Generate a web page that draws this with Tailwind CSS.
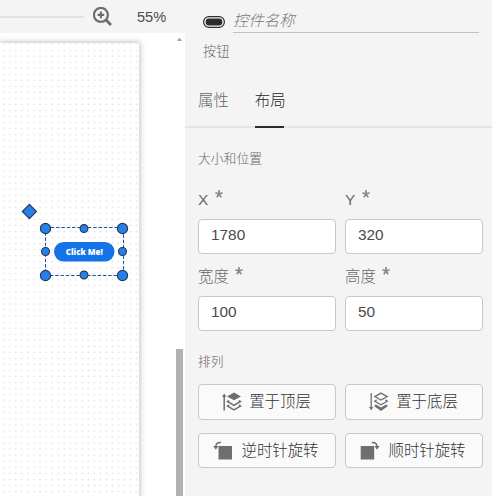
<!DOCTYPE html>
<html lang="zh-CN">
<head>
<meta charset="utf-8">
<title>布局</title>
<script src="https://cdn.jsdelivr.net/npm/@tailwindcss/browser@4"></script>
</head>
<body class="m-0 flex h-[496px] w-[492px] overflow-hidden bg-[#f4f4f4] font-['Liberation_Sans','Noto_Sans_CJK_SC',sans-serif] text-[15.4px] text-[#666]">
<main class="flex w-[185px] shrink-0 flex-col">
  <header class="flex h-[33px] items-center">
    <div class="h-0.5 w-[84px] bg-[#e1e1e1]"></div>
    <svg class="ml-[9px] h-5 w-5" viewBox="0 0 20 20" fill="none" stroke="#6e6e6e"><circle cx="7.9" cy="7.9" r="7" stroke-width="2.2"/><path d="M4.6 7.9h6.6M7.9 4.6v6.6" stroke-width="2.1"/><path d="M12.8 12.8l5.2 5.2" stroke-width="2.8"/></svg>
    <span class="ml-6 text-[14.6px] leading-4 text-[#4b4b4b]">55%</span>
  </header>
  <div class="flex h-[463px] overflow-hidden bg-white">
    <section class="relative mt-[10px] h-[470px] w-[139px] shrink-0 bg-white bg-[radial-gradient(circle_at_3px_3px,#e2e2e2_0.6px,transparent_1.1px)] bg-[length:6.05px_6.05px] bg-[position:-5.3px_-2px] shadow-[0_0_6px_1px_rgba(0,0,0,0.25)]">
      <svg class="absolute left-0 top-0" width="139" height="260" viewBox="0 43 139 260">
        <rect x="45.5" y="227.5" width="78" height="48" fill="none" stroke="#1556ad" stroke-dasharray="3.5 1.8"/>
        <rect x="54" y="242" width="60.5" height="19.5" rx="9.7" fill="#1473e6"/>
        <text x="84.3" y="255.3" text-anchor="middle" fill="white" font-family="Open Sans" font-size="8" font-weight="800">Click Me!</text>
        <g fill="#2680eb" stroke="#26384c" stroke-width="1.1">
          <path d="M29.4 204.4l7.1 7.1-7.1 7.1-7.1-7.1z"/>
          <circle cx="45.5" cy="228.5" r="5.1"/><circle cx="122.5" cy="228.5" r="5.1"/><circle cx="45.5" cy="275.5" r="5.1"/><circle cx="122.5" cy="275.5" r="5.1"/>
          <circle cx="84" cy="228.5" r="3.9"/><circle cx="84" cy="275" r="3.9"/><circle cx="45.5" cy="251.5" r="4"/><circle cx="122.5" cy="251.5" r="4"/>
        </g>
      </svg>
    </section>
    <div class="ml-[37px] flex w-[7px] shrink-0 flex-col items-center">
      <svg class="mt-[5px] h-[3px] w-[5px] shrink-0" viewBox="0 0 5 3"><path d="M0 3L2 0h1l2 3z" fill="#aaa"/></svg>
      <div class="mt-[308px] h-[147px] w-full shrink-0 bg-[#b2b2b2]"></div>
    </div>
  </div>
</main>
<aside class="w-[307px] shrink-0">
  <div class="flex h-[33px] pl-[18px]">
    <svg class="mt-4 h-3 w-[22px]" viewBox="0 0 22 12"><rect x=".6" y=".6" width="20.8" height="10.8" rx="5.4" fill="none" stroke="#2c2c2c" stroke-width="1.2"/><rect x="2.7" y="2.5" width="16.6" height="7" rx="3.2" fill="#2c2c2c"/></svg>
    <div class="ml-2 w-[246px] border-b border-[#c2c2c2] pt-[9px] font-light italic leading-6 text-[#777]">控件名称</div>
  </div>
  <div class="h-[47px] pl-[18px] pt-[9px] text-[13.2px] font-light leading-5">按钮</div>
  <nav class="flex h-12 gap-[26px] border-b-2 border-[#e5e5e5] pl-[13px] leading-[41px] font-light">
    <span class="h-12">属性</span><span class="flex h-12 flex-col text-[#1c1c1c]"><span class="h-[46px]">布局</span><span class="h-0.5 w-[29px] shrink-0 bg-[#2c2c2c]"></span></span>
  </nav>
  <div class="pl-[13px] pr-[9px]">
    <h2 class="h-[58px] pt-[21px] text-[12.8px] font-light leading-5">大小和位置</h2>
    <div class="grid grid-cols-2 gap-x-[9px]">
      <label class="h-[77px]"><span class="flex h-[33px] gap-[7px] leading-7">X<svg class="mt-[4px] h-2 w-2" viewBox="0 0 8 8" fill="none" stroke="#8a8a8a" stroke-width="1.7"><path d="M4 4V0M4 4L.4 2.8M4 4L1.8 7.2M4 4l2.2 3.2M4 4l3.6-1.2"/></svg></span><span class="flex h-[35px] rounded border border-[#c8c8c8] bg-white pl-3 leading-[30px] text-[#4b4b4b]">1780</span></label>
      <label class="h-[77px]"><span class="flex h-[33px] gap-[7px] leading-7">Y<svg class="mt-[4px] h-2 w-2" viewBox="0 0 8 8" fill="none" stroke="#8a8a8a" stroke-width="1.7"><path d="M4 4V0M4 4L.4 2.8M4 4L1.8 7.2M4 4l2.2 3.2M4 4l3.6-1.2"/></svg></span><span class="flex h-[35px] rounded border border-[#c8c8c8] bg-white pl-3 leading-[30px] text-[#4b4b4b]">320</span></label>
      <label class="h-[77px]"><span class="flex h-[33px] gap-[6px] font-light leading-7">宽度<svg class="mt-[4px] h-2 w-2" viewBox="0 0 8 8" fill="none" stroke="#8a8a8a" stroke-width="1.7"><path d="M4 4V0M4 4L.4 2.8M4 4L1.8 7.2M4 4l2.2 3.2M4 4l3.6-1.2"/></svg></span><span class="flex h-[35px] rounded border border-[#c8c8c8] bg-white pl-3 leading-[30px] text-[#4b4b4b]">100</span></label>
      <label class="h-[77px]"><span class="flex h-[33px] gap-[6px] font-light leading-7">高度<svg class="mt-[4px] h-2 w-2" viewBox="0 0 8 8" fill="none" stroke="#8a8a8a" stroke-width="1.7"><path d="M4 4V0M4 4L.4 2.8M4 4L1.8 7.2M4 4l2.2 3.2M4 4l3.6-1.2"/></svg></span><span class="flex h-[35px] rounded border border-[#c8c8c8] bg-white pl-3 leading-[30px] text-[#4b4b4b]">50</span></label>
    </div>
    <h2 class="h-[44px] pt-[12px] text-[12.8px] font-light leading-5">排列</h2>
    <div class="grid grid-cols-2 gap-x-[9px] gap-y-[13px] font-light text-[#333]">
      <button class="flex h-9 items-center justify-center gap-[7px] rounded border border-[#c8c8c8] bg-[#fafafa] pr-px"><svg class="h-5 w-5" viewBox="0 0 20 20" fill="none" stroke="#6e6e6e" stroke-width="1.5"><path d="M2.2 18.5V3"/><path d="M0 4.7L2.2 1.5l2.2 3.2z" fill="#6e6e6e" stroke="none"/><path d="M12 .5l7 3.9-7 3.9-7-3.9z" fill="#6e6e6e" stroke="none"/><path d="M7.2 8.6l-1.7.9 6.5 3.9 6.5-3.9-1.7-.9M7.2 13.2l-1.7.9 6.5 3.9 6.5-3.9-1.7-.9"/></svg>置于顶层</button>
      <button class="flex h-9 items-center justify-center gap-[7px] rounded border border-[#c8c8c8] bg-[#fafafa] pr-px"><svg class="h-5 w-5" viewBox="0 0 20 20" fill="none" stroke="#6e6e6e" stroke-width="1.3"><path d="M2.2 1v16"/><path d="M0 15l2.2 3.2L4.4 15z" fill="#6e6e6e" stroke="none"/><path d="M12 1.1l6.2 3.5L12 8.1 5.8 4.6zM7.6 7.9l-1.8 1.3 6.2 3.6 6.2-3.6-1.8-1.3"/><path d="M7 12.6l-2 1.4 7 4.9 7-4.9-2-1.4-5 2.9z" fill="#6e6e6e" stroke="none"/></svg>置于底层</button>
      <button class="flex h-[35px] items-center justify-center gap-[9px] rounded border border-[#c8c8c8] bg-[#fafafa] pr-[3px]"><svg class="h-5 w-5" viewBox="0 0 20 20" fill="none"><path d="M5.5 5h13.5v13.5H5.5z" fill="#6e6e6e"/><path d="M8 1.5C4.5 1.2 3 2.8 2.8 5.5" stroke="#6e6e6e" stroke-width="1.5"/><path d="M.2 5h5.2L2.8 8.8z" fill="#6e6e6e"/></svg>逆时针旋转</button>
      <button class="flex h-[35px] items-center justify-center gap-[9px] rounded border border-[#c8c8c8] bg-[#fafafa] pr-[3px]"><svg class="h-5 w-5" viewBox="0 0 20 20" fill="none"><path d="M.7 5h13.5v13.5H.7z" fill="#6e6e6e"/><path d="M11.8 1.5c3.5-.3 5 1.3 5.2 4" stroke="#6e6e6e" stroke-width="1.5"/><path d="M14.4 5h5.2L17 8.8z" fill="#6e6e6e"/></svg>顺时针旋转</button>
    </div>
  </div>
</aside>
</body>
</html>
